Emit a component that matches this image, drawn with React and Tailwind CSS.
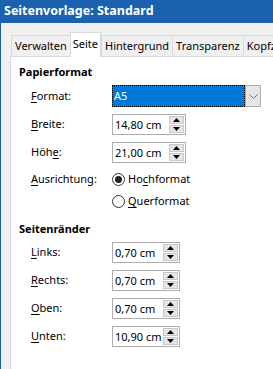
import React from 'react';

const U = ({ children }) => <span className="underline underline-offset-2">{children}</span>;

const Spin = ({ value, wide }) => (
    <div className={`flex h-[21px] items-stretch border border-[#adadad] bg-white ${wide ? 'w-[74px]' : 'w-[68px]'}`}>
        <div className="flex flex-1 items-center pl-[2px] text-[11px] leading-none whitespace-nowrap">{value}</div>
        <div className="my-[1px] mr-[1px] flex w-[15px] shrink-0 flex-col gap-[1px]">
            <div className="flex flex-1 items-center justify-center border border-[#c8c8c8] bg-[#e5e5e5]">
                <svg width="7" height="4" viewBox="0 0 7 4"><path d="M0 4 L3.5 0 L7 4 Z" fill="#000" /></svg>
            </div>
            <div className="flex flex-1 items-center justify-center border border-[#c8c8c8] bg-[#e5e5e5]">
                <svg width="7" height="4" viewBox="0 0 7 4"><path d="M0 0 L3.5 4 L7 0 Z" fill="#000" /></svg>
            </div>
        </div>
    </div>
);

const Row = ({ label, children, className = '' }) => (
    <div className={`flex items-center ${className}`}>
        <div className="w-[81px] shrink-0 text-[11px]">{label}</div>
        {children}
    </div>
);

const Radio = ({ checked, children }) => (
    <div className="flex items-center gap-[3px] text-[11px]">
        <div className="flex h-[13px] w-[13px] items-center justify-center rounded-full border border-[#333] bg-white">
            {checked && <div className="h-[7px] w-[7px] rounded-full bg-[#222]" />}
        </div>
        <span>{children}</span>
    </div>
);

const tabs = ['Verwalten', 'Seite', 'Hintergrund', 'Transparenz', 'Kopfzeile', 'Fußzeile'];

export default function App() {
    return (
        <div className="h-[369px] w-[273px] overflow-hidden bg-[#f0f0f0] text-black" style={{ fontFamily: '"Noto Sans", sans-serif' }}>
            <div className="flex h-[23px] items-center bg-[#1a62b0] pl-[4px] text-[12.5px] font-bold text-white">
                Seitenvorlage: Standard
            </div>
            <div className="flex h-[346px] border-l border-[#1a62b0]">
                <div className="w-[9px] shrink-0" />
                <div className="flex min-w-0 flex-1 flex-col">
                    <div className="flex h-[33px] items-end pl-[1px] whitespace-nowrap">
                        {tabs.map((t) =>
                            t === 'Seite' ? (
                                <div key={t} className="relative z-10 -mb-[1px] flex h-[25px] shrink-0 items-center border border-b-0 border-[#d9d9d9] bg-white px-[2px] pb-[2px] text-[11px]">
                                    {t}
                                </div>
                            ) : (
                                <div key={t} className="flex h-[21px] shrink-0 items-center border border-b-0 border-r-0 border-[#d9d9d9] px-[3px] text-[11px] last:border-r">
                                    {t}
                                </div>
                            )
                        )}
                    </div>
                    <div className="flex-1 border-l border-t border-[#d9d9d9] bg-white pl-[8px] pt-[7px]">
                        <div className="text-[11px] font-bold leading-[16px]">Papierformat</div>
                        <div className="mt-[5px] flex flex-col gap-[7px] pl-[12px]">
                            <Row label={<><U>F</U>ormat:</>}>
                                <div className="flex h-[22px] w-[149px]">
                                    <div className="flex flex-1 items-center border border-dotted border-black bg-[#0078d7] pl-[1px] text-[11px] text-white">A5</div>
                                    <div className="flex w-[16px] items-center justify-center border border-[#adadad] bg-[#e5e5e5]">
                                        <svg width="9" height="5" viewBox="0 0 9 5"><path d="M0.5 0.5 L4.5 4.5 L8.5 0.5" fill="none" stroke="#777" /></svg>
                                    </div>
                                </div>
                            </Row>
                            <Row label={<><U>B</U>reite:</>}><Spin value="14,80 cm" wide /></Row>
                            <Row label={<>Höh<U>e</U>:</>}><Spin value="21,00 cm" wide /></Row>
                            <Row label={<><U>A</U>usrichtung:</>} className="mt-[1px] h-[16px]">
                                <Radio checked>Ho<U>c</U>hformat</Radio>
                            </Row>
                            <Row label="" className="-mt-[1px] h-[16px]">
                                <Radio><U>Q</U>uerformat</Radio>
                            </Row>
                        </div>
                        <div className="mt-[12px] text-[11px] font-bold leading-[16px]">Seitenränder</div>
                        <div className="mt-[5px] flex flex-col gap-[7px] pl-[12px]">
                            <Row label={<><U>L</U>inks:</>}><Spin value="0,70 cm" /></Row>
                            <Row label={<><U>R</U>echts:</>}><Spin value="0,70 cm" /></Row>
                            <Row label={<><U>O</U>ben:</>}><Spin value="0,70 cm" /></Row>
                            <Row label={<><U>U</U>nten:</>}><Spin value="10,90 cm" /></Row>
                        </div>
                    </div>
                </div>
            </div>
        </div>
    );
}
